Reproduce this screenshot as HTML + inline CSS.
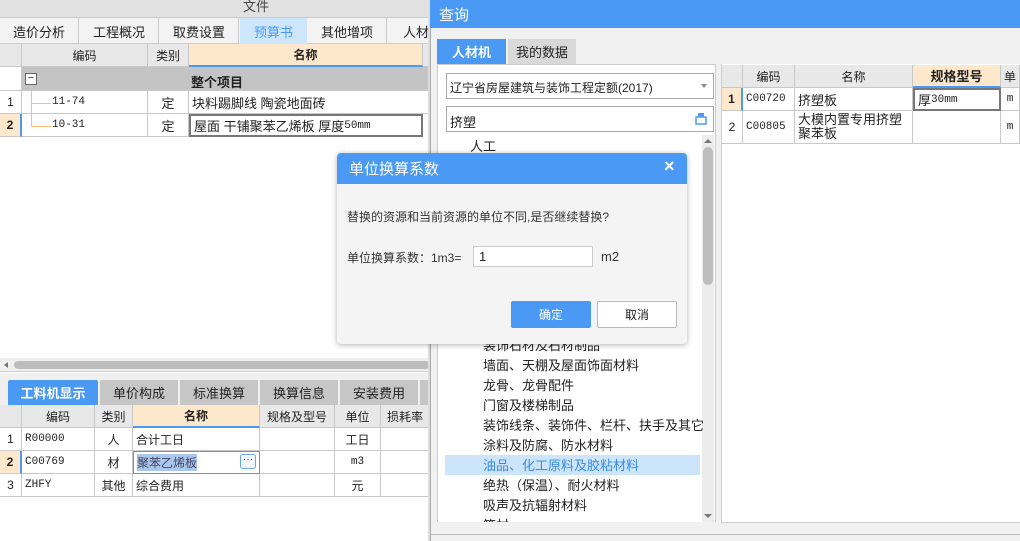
<!DOCTYPE html>
<html><head><meta charset="utf-8"><style>
*{margin:0;padding:0;box-sizing:border-box}
body{width:1020px;height:541px;overflow:hidden;background:#fff;font-family:"Liberation Sans","Noto Sans CJK SC",sans-serif;font-size:12px;color:#222;position:relative}
.a{position:absolute}
.c{position:absolute;display:flex;align-items:center;justify-content:center;border-right:1px solid #c8c8c8;border-bottom:1px solid #c8c8c8;white-space:nowrap;overflow:hidden}
.l{justify-content:flex-start;padding-left:3px}
.h{background:#e8e8e8}
.o{background:#fde8cc;font-weight:bold}
.m{font-family:"Liberation Mono","Noto Sans CJK SC",monospace;font-size:11px}
.tab{position:absolute;display:flex;align-items:center;justify-content:center;font-size:13px}
</style></head><body>
<!-- left top -->
<div class="a" style="left:0;top:0;width:430px;height:18px;background:#e1e1e1;border-bottom:1px solid #ccc"></div>
<div class="a" style="left:243px;top:-4px;font-size:13px;color:#444">文件</div>
<div class="a" style="left:0;top:18px;width:430px;height:26px;background:#f3f3f3;border-bottom:1px solid #ccc"></div>
<div class="tab" style="left:0;top:18px;width:79px;height:26px;border-right:1px solid #ccc">造价分析</div>
<div class="tab" style="left:80px;top:18px;width:79px;height:26px;border-right:1px solid #ccc">工程概况</div>
<div class="tab" style="left:160px;top:18px;width:79px;height:26px;border-right:1px solid #ccc">取费设置</div>
<div class="tab" style="left:240px;top:18px;width:67px;height:26px;background:#cde6fb;color:#4a9af5">预算书</div>
<div class="tab" style="left:308px;top:18px;width:79px;height:26px;border-right:1px solid #ccc">其他增项</div>
<div class="tab" style="left:388px;top:18px;width:50px;height:26px;justify-content:flex-start;padding-left:15px">人材</div>
<div class="c h" style="left:0;top:44px;width:22px;height:23px"></div>
<div class="c h" style="left:22px;top:44px;width:126px;height:23px">编码</div>
<div class="c h" style="left:148px;top:44px;width:41px;height:23px">类别</div>
<div class="c o" style="left:189px;top:44px;width:234px;height:23px;border-bottom:2px solid #4a9af5">名称</div>
<div class="c h" style="left:423px;top:44px;width:7px;height:23px"></div>
<div class="c" style="left:0;top:67px;width:22px;height:24px"></div>
<div class="c" style="left:22px;top:67px;width:408px;height:24px;background:#c4c4c4"></div>
<div class="a" style="left:25px;top:73px;width:12px;height:12px;border:1px solid #666;background:#fff;font-size:11px;line-height:8px;text-align:center">−</div>
<div class="a" style="left:191px;top:72px;font-weight:bold;font-size:13px">整个项目</div>
<div class="c" style="left:0;top:91px;width:22px;height:23px">1</div>
<div class="c m l" style="left:22px;top:91px;width:126px;height:23px;padding-left:30px">11-74</div>
<div class="c" style="left:148px;top:91px;width:41px;height:23px;font-size:13px">定</div>
<div class="c l" style="left:189px;top:91px;width:241px;height:23px;font-size:13px">块料踢脚线 陶瓷地面砖</div>
<div class="c" style="left:0;top:114px;width:22px;height:23px;background:#fde8cc;font-weight:bold;border-right:2px solid #4a9af5">2</div>
<div class="c m l" style="left:22px;top:114px;width:126px;height:23px;padding-left:30px">10-31</div>
<div class="c" style="left:148px;top:114px;width:41px;height:23px;font-size:13px">定</div>
<div class="c l" style="left:189px;top:114px;width:234px;height:23px;border:2px solid #777;font-size:13px">屋面 干铺聚苯乙烯板 厚度 <span class="m">50mm</span></div>
<div class="a" style="left:31px;top:86px;width:1px;height:40px;background:#f5c070"></div>
<div class="a" style="left:31px;top:103px;width:20px;height:1px;background:#f5c070"></div>
<div class="a" style="left:31px;top:126px;width:20px;height:1px;background:#f5c070"></div>
<!-- scrollbar -->
<div class="a" style="left:0;top:358px;width:430px;height:14px;background:#f0f0f0;border-bottom:1px solid #ccc"></div>
<div class="a" style="left:14px;top:361px;width:416px;height:8px;background:#bdbdbd;border-radius:4px"></div>
<div class="a" style="left:4px;top:362px;border-right:4px solid #777;border-top:3px solid transparent;border-bottom:3px solid transparent"></div>
<div class="a" style="left:0;top:373px;width:430px;height:32px;background:#f0f0f0"></div>
<div class="tab" style="left:8px;top:380px;width:90px;height:25px;background:#4a9af5;color:#fff;font-weight:bold;border-radius:2px 2px 0 0">工料机显示</div>
<div class="tab" style="left:100px;top:380px;width:78px;height:25px;background:#c6c6c6">单价构成</div>
<div class="tab" style="left:180px;top:380px;width:78px;height:25px;background:#c6c6c6">标准换算</div>
<div class="tab" style="left:260px;top:380px;width:78px;height:25px;background:#c6c6c6">换算信息</div>
<div class="tab" style="left:340px;top:380px;width:78px;height:25px;background:#c6c6c6">安装费用</div>
<div class="tab" style="left:420px;top:380px;width:10px;height:25px;background:#c6c6c6"></div>
<div class="c h" style="left:0;top:405px;width:22px;height:23px"></div>
<div class="c h" style="left:22px;top:405px;width:73px;height:23px">编码</div>
<div class="c h" style="left:95px;top:405px;width:38px;height:23px">类别</div>
<div class="c o" style="left:133px;top:405px;width:127px;height:23px;border-bottom:2px solid #4a9af5">名称</div>
<div class="c h" style="left:260px;top:405px;width:75px;height:23px">规格及型号</div>
<div class="c h" style="left:335px;top:405px;width:46px;height:23px">单位</div>
<div class="c h" style="left:381px;top:405px;width:49px;height:23px">损耗率</div>
<div class="c" style="left:0;top:428px;width:22px;height:23px">1</div>
<div class="c m l" style="left:22px;top:428px;width:73px;height:23px">R00000</div>
<div class="c" style="left:95px;top:428px;width:38px;height:23px">人</div>
<div class="c l" style="left:133px;top:428px;width:127px;height:23px">合计工日</div>
<div class="c" style="left:260px;top:428px;width:75px;height:23px"></div>
<div class="c" style="left:335px;top:428px;width:46px;height:23px">工日</div>
<div class="c" style="left:381px;top:428px;width:49px;height:23px"></div>
<div class="c" style="left:0;top:451px;width:22px;height:23px;background:#fde8cc;font-weight:bold;border-right:2px solid #4a9af5">2</div>
<div class="c m l" style="left:22px;top:451px;width:73px;height:23px">C00769</div>
<div class="c" style="left:95px;top:451px;width:38px;height:23px">材</div>
<div class="c l" style="left:133px;top:451px;width:127px;height:23px;border:1px solid #4a9af5"><span style="background:#a9c8ec;color:#446">聚苯乙烯板</span></div>
<div class="a" style="left:240px;top:454px;width:16px;height:15px;border:1px solid #6aa8ec;border-radius:3px;background:#f4f8fd;font-size:10px;line-height:10px;text-align:center;color:#357">···</div>
<div class="c" style="left:260px;top:451px;width:75px;height:23px"></div>
<div class="c m" style="left:335px;top:451px;width:46px;height:23px">m3</div>
<div class="c" style="left:381px;top:451px;width:49px;height:23px"></div>
<div class="c" style="left:0;top:474px;width:22px;height:23px">3</div>
<div class="c m l" style="left:22px;top:474px;width:73px;height:23px">ZHFY</div>
<div class="c" style="left:95px;top:474px;width:38px;height:23px">其他</div>
<div class="c l" style="left:133px;top:474px;width:127px;height:23px">综合费用</div>
<div class="c" style="left:260px;top:474px;width:75px;height:23px"></div>
<div class="c" style="left:335px;top:474px;width:46px;height:23px">元</div>
<div class="c" style="left:381px;top:474px;width:49px;height:23px"></div>
<div class="a" style="left:428px;top:0;width:2px;height:541px;background:#ddd"></div>

<!-- query dialog -->
<div class="a" style="left:430px;top:0;width:590px;height:541px;background:#f1f1f1;border-left:1px solid #aaa"></div>
<div class="a" style="left:430px;top:0;width:590px;height:28px;background:#4a9af5;color:#fff;font-size:15px;padding:4px 0 0 9px">查询</div>
<div class="tab" style="left:437px;top:39px;width:69px;height:25px;background:#4a9af5;color:#fff;font-weight:bold">人材机</div>
<div class="tab" style="left:508px;top:39px;width:68px;height:25px;background:#d9d9d9">我的数据</div>
<div class="a" style="left:437px;top:64px;width:279px;height:459px;background:#fff;border:1px solid #ccc"></div>
<div class="a" style="left:446px;top:73px;width:268px;height:26px;border:1px solid #aaa;background:#fff;padding:5px 0 0 3px;font-size:12px">辽宁省房屋建筑与装饰工程定额(2017)</div>
<div class="a" style="left:701px;top:84px;border-top:4px solid #888;border-left:3px solid transparent;border-right:3px solid transparent"></div>
<div class="a" style="left:446px;top:106px;width:268px;height:26px;border:1px solid #aaa;background:#fff;padding:5px 0 0 3px;font-size:13px">挤塑</div>
<svg class="a" style="left:694px;top:112px" width="14" height="14"><rect x="2" y="5" width="10" height="7" fill="none" stroke="#4a9af5" stroke-width="1.5"/><rect x="4" y="1" width="6" height="4" fill="#4a9af5"/></svg>
<div class="a" style="left:702px;top:135px;width:12px;height:387px;background:#ececec"></div>
<div class="a" style="left:704px;top:139px;border-bottom:4px solid #777;border-left:4px solid transparent;border-right:4px solid transparent"></div>
<div class="a" style="left:703px;top:147px;width:10px;height:138px;background:#bdbdbd;border-radius:5px"></div>
<div class="a" style="left:704px;top:514px;border-top:4px solid #777;border-left:4px solid transparent;border-right:4px solid transparent"></div>
<div class="a" style="left:470px;top:136px;font-size:13px">人工</div>
<div class="a" style="left:445px;top:455px;width:255px;height:20px;background:#cce5fb"></div>
<div class="a" style="left:483px;top:336px;font-size:13px;line-height:20px;color:#222">装饰石材及石材制品<br>墙面、天棚及屋面饰面材料<br>龙骨、龙骨配件<br>门窗及楼梯制品<br>装饰线条、装饰件、栏杆、扶手及其它<br>涂料及防腐、防水材料<br><span style="color:#3a8ae5">油品、化工原料及胶粘材料</span><br>绝热（保温）、耐火材料<br>吸声及抗辐射材料<br>箱材</div>
<div class="a" style="left:437px;top:522px;width:280px;height:19px;background:#f1f1f1"></div>
<div class="a" style="left:430px;top:534px;width:590px;height:1px;background:#bbb"></div>
<!-- right table -->
<div class="a" style="left:721px;top:64px;width:299px;height:459px;background:#fff;border-left:1px solid #ccc;border-bottom:1px solid #ccc"></div>
<div class="c h" style="left:722px;top:65px;width:21px;height:23px"></div>
<div class="c h" style="left:743px;top:65px;width:52px;height:23px">编码</div>
<div class="c h" style="left:795px;top:65px;width:118px;height:23px">名称</div>
<div class="c o" style="left:913px;top:65px;width:88px;height:23px;border-bottom:2px solid #4a9af5;font-size:13px">规格型号</div>
<div class="c h" style="left:1001px;top:65px;width:19px;height:23px">单</div>
<div class="c" style="left:722px;top:88px;width:21px;height:23px;background:#fde8cc;font-weight:bold;border-right:2px solid #4a9af5">1</div>
<div class="c m l" style="left:743px;top:88px;width:52px;height:23px">C00720</div>
<div class="c l" style="left:795px;top:88px;width:118px;height:23px;font-size:13px">挤塑板</div>
<div class="c l" style="left:913px;top:88px;width:88px;height:23px;border:2px solid #777;font-size:13px">厚<span class="m">30mm</span></div>
<div class="c m" style="left:1001px;top:88px;width:19px;height:23px">m</div>
<div class="c" style="left:722px;top:111px;width:21px;height:33px">2</div>
<div class="c m l" style="left:743px;top:111px;width:52px;height:33px">C00805</div>
<div class="c l" style="left:795px;top:111px;width:118px;height:33px;white-space:normal;line-height:14px;font-size:13px">大模内置专用挤塑聚苯板</div>
<div class="c" style="left:913px;top:111px;width:88px;height:33px"></div>
<div class="c m" style="left:1001px;top:111px;width:19px;height:33px">m</div>

<!-- small dialog -->
<div class="a" style="left:337px;top:153px;width:350px;height:191px;background:#f4f4f4;border-radius:4px;box-shadow:0 1px 6px rgba(0,0,0,.3);overflow:hidden">
<div class="a" style="left:0;top:0;width:350px;height:31px;background:#4a9af5;color:#fff;font-size:15px;padding:5px 0 0 12px">单位换算系数</div>
<div class="a" style="left:327px;top:3px;color:#fff;font-size:18px;font-weight:bold">×</div>
<div class="a" style="left:10px;top:55px;font-size:12px;color:#333">替换的资源和当前资源的单位不同,是否继续替换?</div>
<div class="a" style="left:10px;top:96px;font-size:12px;color:#333">单位换算系数：1m3=</div>
<div class="a" style="left:136px;top:93px;width:120px;height:21px;background:#fff;border:1px solid #ccc;padding:2px 0 0 5px;font-size:13px">1</div>
<div class="a" style="left:264px;top:96px;font-size:13px;color:#333">m2</div>
<div class="tab" style="left:174px;top:148px;width:80px;height:27px;background:#4a9af5;color:#fff;border-radius:2px;font-size:12px">确定</div>
<div class="tab" style="left:260px;top:148px;width:80px;height:27px;background:#fff;border:1px solid #bbb;border-radius:2px;font-size:12px">取消</div>
</div>
</body></html>
